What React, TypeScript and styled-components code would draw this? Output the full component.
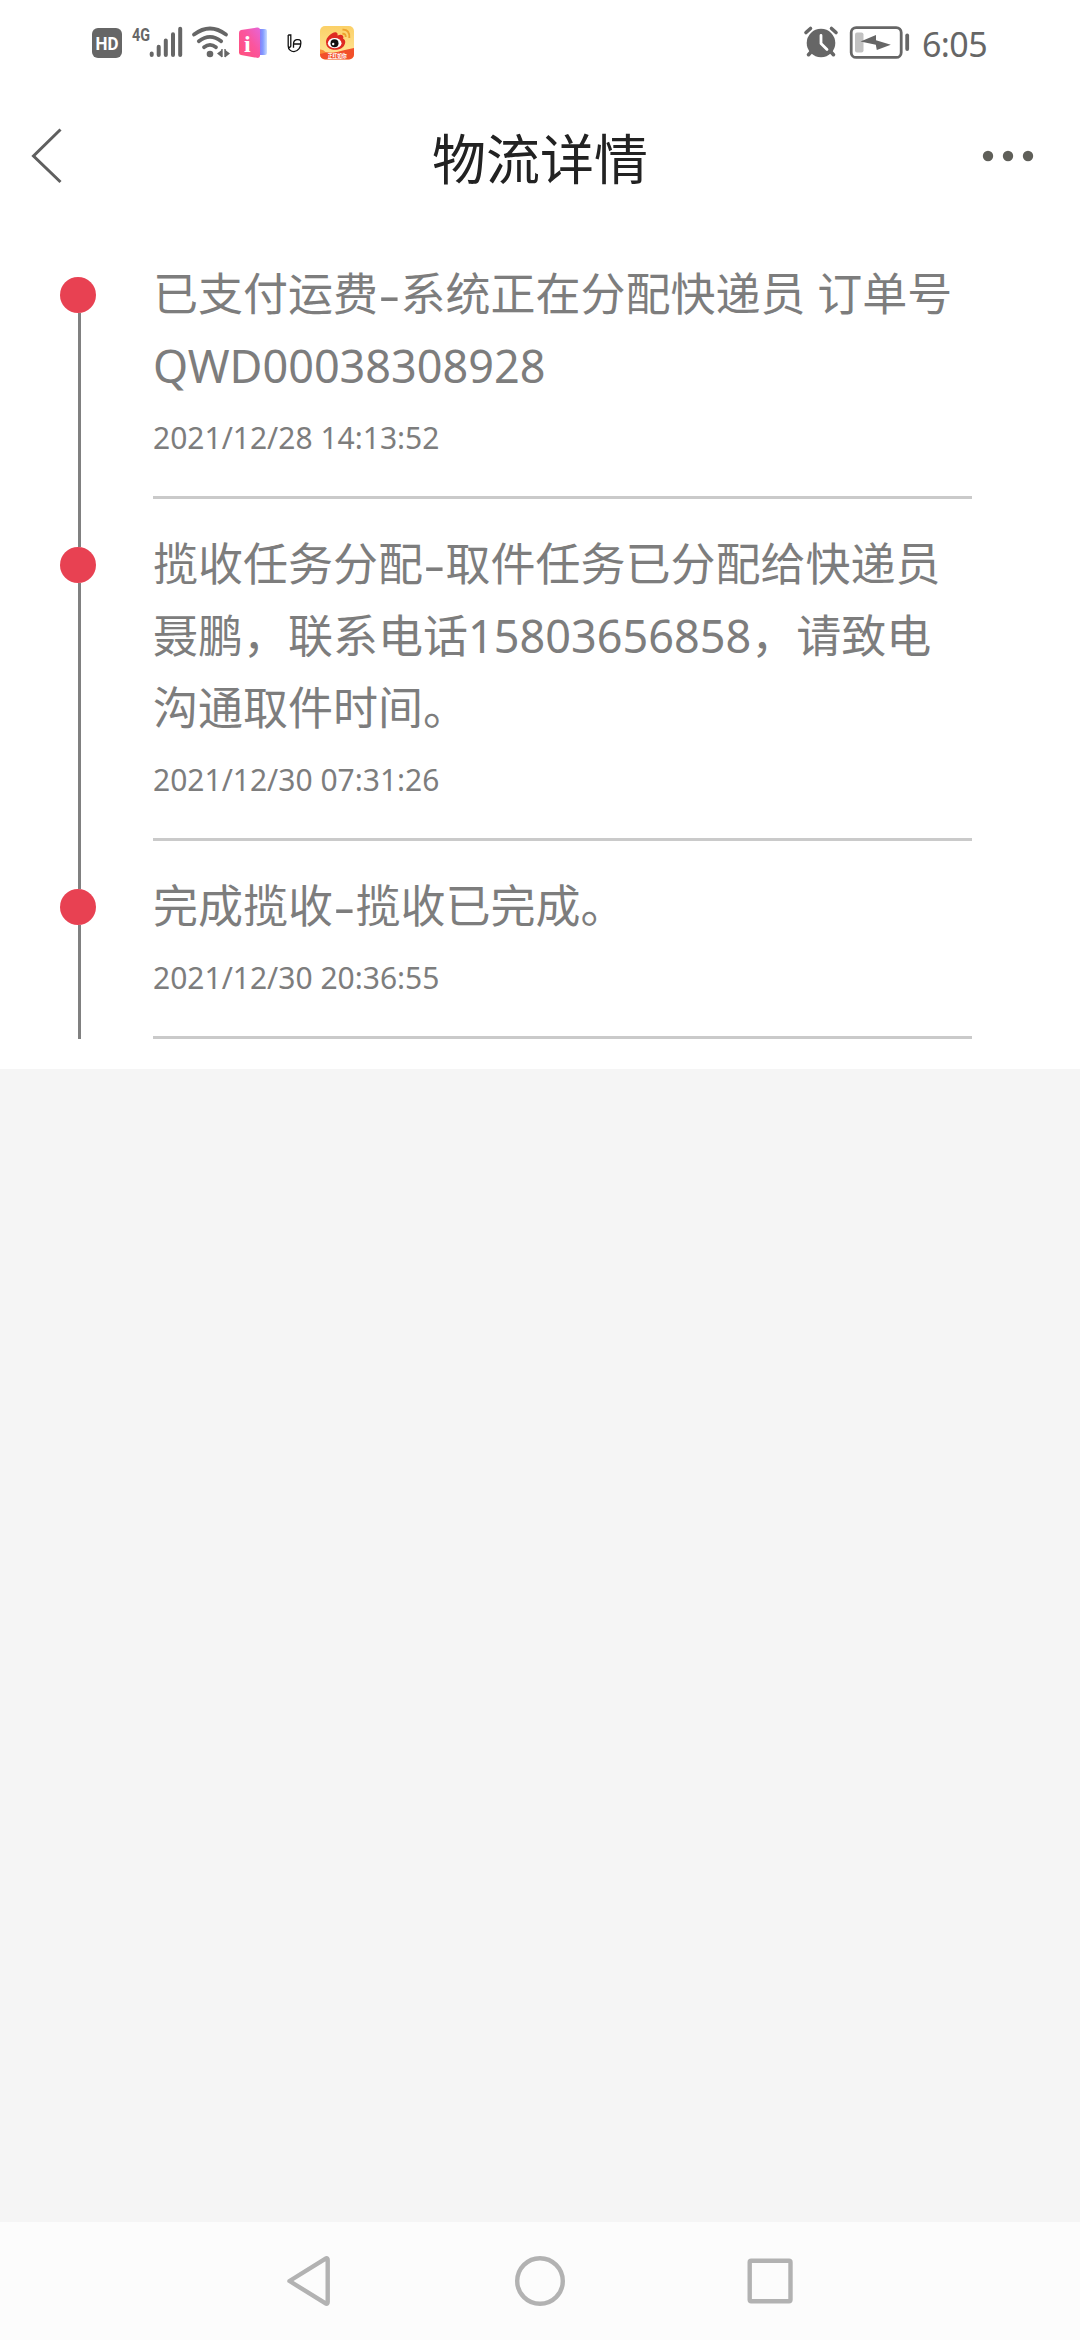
import React from "react";
import styled, { createGlobalStyle } from "styled-components";

const GlobalStyle = createGlobalStyle`
  html, body { margin: 0; padding: 0; background: #f5f5f5; }
  * { box-sizing: border-box; }
`;

const Screen = styled.div`
  width: 1080px;
  height: 2340px;
  display: flex;
  flex-direction: column;
  overflow: hidden;
  background: #f5f5f5;
  color: #7d7d7d;
  font-family: "Noto Sans", "Noto Sans CJK SC", sans-serif;
`;

const StatusBar = styled.header`
  height: 86px;
  padding: 26px 92px 0;
  display: flex;
  align-items: flex-start;
  justify-content: space-between;
  background: #fff;
`;

const StatusGroup = styled.div`
  display: flex;
  align-items: flex-start;
  height: 34px;
`;

const StatusIcon = styled.svg<{ $before?: number }>`
  display: block;
  flex: none;
  height: 34px;
  overflow: visible;
  margin-left: ${(p) => p.$before ?? 0}px;
`;

const Clock = styled.time`
  margin-left: 12px;
  width: 66px;
  font-size: 34px;
  line-height: 36px;
  letter-spacing: -0.6px;
  color: #666;
`;

const TitleBar = styled.nav`
  height: 143px;
  padding: 0 44px 3px 30px;
  display: grid;
  grid-template-columns: 200px 1fr 186px;
  align-items: center;
  background: #fff;
`;

const Title = styled.h1`
  margin: 0;
  padding-top: 5px;
  font-size: 54px;
  line-height: 72px;
  font-weight: 400;
  color: #222;
  text-align: center;
`;

const BackIcon = styled.svg`
  display: block;
  width: 32px;
  height: 56px;
`;

const MoreIcon = styled.svg`
  display: block;
  justify-self: end;
  width: 54px;
  height: 12px;
`;

const Timeline = styled.ol`
  margin: 0;
  padding: 0 108px 30px 60px;
  list-style: none;
  background: #fff;
`;

const Entry = styled.li`
  display: grid;
  grid-template-columns: 36px 1fr;
  column-gap: 57px;
`;

const Rail = styled.div`
  display: flex;
  flex-direction: column;
`;

const Segment = styled.span<{ $lead?: boolean; $hidden?: boolean }>`
  width: 3px;
  margin-left: 18px;
  flex: ${(p) => (p.$lead ? "0 0 48px" : "1")};
  background: ${(p) => (p.$hidden ? "transparent" : "#808080")};
`;

const Dot = styled.span`
  width: 36px;
  height: 36px;
  flex: none;
  border-radius: 50%;
  background: #e84152;
`;

const Details = styled.div`
  padding: 29px 0 22px;
  border-bottom: 3px solid #cacaca;
`;

const Message = styled.p`
  margin: 0;
  font-size: 45px;
  line-height: 72px;
  white-space: pre;
`;

const Dash = styled.span`
  display: inline-block;
  width: 14.5px;
  margin: 0 4px;
  transform: scaleX(1.5);
`;

const Stamp = styled.time`
  display: block;
  font-size: 30px;
  line-height: 72px;
`;

const SystemNav = styled.footer`
  margin-top: auto;
  height: 118px;
  padding: 0 286px;
  display: flex;
  align-items: center;
  justify-content: space-between;
  background: #fcfcfc;
`;

const NavIcon = styled.svg`
  display: block;
  height: 52px;
  fill: none;
  stroke: #b2b2b2;
  stroke-width: 4.4;
  stroke-linejoin: round;
`;

const entries = [
  {
    stage: "已支付运费",
    message: "系统正在分配快递员 订单号\nQWD00038308928",
    time: "2021/12/28 14:13:52",
  },
  {
    stage: "揽收任务分配",
    message: "取件任务已分配给快递员\n聂鹏，联系电话15803656858，请致电\n沟通取件时间。",
    time: "2021/12/30 07:31:26",
  },
  { stage: "完成揽收", message: "揽收已完成。", time: "2021/12/30 20:36:55" },
];

function HdIcon() {
  return (
    <StatusIcon width="30" viewBox="92 26 30 34">
      <rect x="92" y="28" width="30" height="30" rx="6" fill="#666" />
      <text x="107" y="49.8" textAnchor="middle" fontSize="18" fontWeight="700" fill="#fff" fontFamily="Roboto, sans-serif" textLength="23" lengthAdjust="spacingAndGlyphs">HD</text>
    </StatusIcon>
  );
}

function SignalIcon() {
  return (
    <StatusIcon width="51" viewBox="132 26 51 34" $before={10}>
      <text x="132" y="40.5" fontSize="18.5" fontWeight="700" fill="#666" fontFamily="Roboto, sans-serif" textLength="18" lengthAdjust="spacingAndGlyphs">4G</text>
      <g stroke="#666" strokeWidth="4" strokeLinecap="round">
        <path d="M151.7 53.5V55M158.7 46.8V55M165.8 40.5V55M173 34.3V55M180.2 28.7V55" />
      </g>
    </StatusIcon>
  );
}

function WifiIcon() {
  return (
    <StatusIcon width="38" viewBox="192 26 38 34" $before={9}>
      <g fill="none" stroke="#666" strokeWidth="3.8" strokeLinecap="round">
        <path d="M194 34.5Q210 22.5 226 34.5" />
        <path d="M198.8 41.2Q210 32.6 221.2 41.2" />
        <path d="M204 47.2Q210 42.6 216 47.2" />
      </g>
      <circle cx="210" cy="54" r="3.3" fill="#666" />
      <path d="M217 53.6L222 49.8V57.5ZM230 53.6L225 49.8V57.5Z" fill="#666" />
      <path d="M222 49V57M225 49V57" stroke="#666" strokeWidth="1.4" />
    </StatusIcon>
  );
}

function BookIcon() {
  return (
    <StatusIcon width="29" viewBox="239 26 29 34" $before={9}>
      <defs>
        <linearGradient id="cover" x1="0" y1="1" x2="1" y2="0">
          <stop offset="0" stopColor="#ff4f79" />
          <stop offset="0.55" stopColor="#fb559d" />
          <stop offset="1" stopColor="#e665d8" />
        </linearGradient>
        <linearGradient id="pages" x1="0" y1="0" x2="1" y2="0">
          <stop offset="0" stopColor="#8a69f5" />
          <stop offset="0.55" stopColor="#839cff" />
          <stop offset="1" stopColor="#c9dcff" />
        </linearGradient>
      </defs>
      <path d="M258 29H265Q267 29 267 31V53Q267 55 265 55H258Z" fill="url(#pages)" />
      <path d="M239 32.5Q239 30.5 241 30L257 27.6Q260 27.3 260 30V55.5Q260 58.3 257 57.8L241 55Q239 54.6 239 52.5Z" fill="url(#cover)" />
      <text x="247.4" y="51.5" textAnchor="middle" fontSize="24" fontWeight="700" fill="#fff" fontFamily="Liberation Serif, serif">i</text>
    </StatusIcon>
  );
}

function MonogramIcon() {
  return (
    <StatusIcon width="15" viewBox="287 26 15 34" $before={19}>
      <g fill="none" stroke="#111" strokeWidth="1.3">
        <path d="M288.2 35H290.8V45.8Q290.8 47.5 288.4 47.5" />
        <path d="M288.2 35V46C288.2 49.5 291 51.6 294 51.6C298 51.2 300.8 47.5 300.8 43.5V42C300.8 39.8 298.8 39.4 296.8 39.7C294 40.2 293.5 42 293.5 44V47.8M293.5 44H300.5" />
      </g>
    </StatusIcon>
  );
}

function WeiboIcon() {
  return (
    <StatusIcon width="34" viewBox="320 26 34 34" $before={18}>
      <defs>
        <linearGradient id="weibo" x1="0" y1="0" x2="0" y2="1">
          <stop offset="0" stopColor="#fbd067" />
          <stop offset="1" stopColor="#ffe79c" />
        </linearGradient>
        <clipPath id="tile"><rect x="320" y="26" width="34" height="33.5" rx="5" /></clipPath>
      </defs>
      <g clipPath="url(#tile)">
        <rect x="320" y="26" width="34" height="34" fill="url(#weibo)" />
        <path d="M320 51Q330 54 337 52T354 48V60H320Z" fill="#f2502a" />
        <path d="M320 49.5Q323 49 326 52.5L320 54Z" fill="#fa8b35" />
        <path d="M326 42C326 37 333 31 336.5 32.5Q338.3 33.3 337.5 35.5Q342.5 33.5 343.5 37L343 38.5Q346 40 345 43.5C343.5 49.5 336 50.5 332 49.5Q326 48 326 42Z" fill="#df2a22" />
        <ellipse cx="334.7" cy="43.2" rx="6.8" ry="5.1" fill="#fff" />
        <circle cx="334.5" cy="43.2" r="4" fill="#111" />
        <circle cx="333.2" cy="44" r="1.2" fill="#fff" />
        <path d="M342.5 29.7Q350 29.2 349.3 38M342.4 33.8Q346 33.4 345.7 37" fill="none" stroke="#eda22e" strokeWidth="1.9" />
        <text x="337.3" y="58" textAnchor="middle" fontSize="6.2" fontWeight="700" fill="#fff" fontFamily="Noto Sans CJK SC, sans-serif" textLength="19" lengthAdjust="spacingAndGlyphs">正红如你</text>
      </g>
    </StatusIcon>
  );
}

function AlarmIcon() {
  return (
    <StatusIcon width="34" viewBox="805 26 34 34">
      <circle cx="822" cy="43" r="14.3" fill="#666" />
      <g fill="none" stroke="#666" strokeWidth="3.6" strokeLinecap="round">
        <path d="M807 32.5L811.5 28.5M837 32.5L832.5 28.5M812 52L809.5 54.7M832 52L834.5 54.7" />
      </g>
      <path d="M822 35.5V43.5L828 49.5" fill="none" stroke="#fff" strokeWidth="2.8" strokeLinecap="round" strokeLinejoin="round" />
    </StatusIcon>
  );
}

function BatteryIcon() {
  return (
    <StatusIcon width="60" viewBox="851 26 60 34" $before={12}>
      <rect x="852.2" y="27.6" width="50" height="29.8" rx="5" fill="none" stroke="#666" strokeWidth="2.8" />
      <rect x="856" y="32.5" width="8.5" height="20" rx="2" fill="#c2c2c2" />
      <path d="M861.5 41.5L877 35V40.3L891.8 44.8L877.8 50L876.8 44.8Z" fill="#666" />
      <path d="M908.2 35.5V49" stroke="#666" strokeWidth="3.8" strokeLinecap="round" />
    </StatusIcon>
  );
}

export default function App() {
  return (
    <Screen>
      <GlobalStyle />
      <StatusBar>
        <StatusGroup>
          <HdIcon />
          <SignalIcon />
          <WifiIcon />
          <BookIcon />
          <MonogramIcon />
          <WeiboIcon />
        </StatusGroup>
        <StatusGroup>
          <AlarmIcon />
          <BatteryIcon />
          <Clock>6:05</Clock>
        </StatusGroup>
      </StatusBar>

      <TitleBar>
        <BackIcon viewBox="30 128 32 56">
          <path d="M60.5 129.5L33.5 156L60.5 182" fill="none" stroke="#5f5f5f" strokeWidth="3" />
        </BackIcon>
        <Title>物流详情</Title>
        <MoreIcon viewBox="982 151 54 12">
          <g fill="#5f5f59">
            <circle cx="988" cy="157" r="5.2" />
            <circle cx="1008" cy="157" r="5.2" />
            <circle cx="1028" cy="157" r="5.2" />
          </g>
        </MoreIcon>
      </TitleBar>

      <Timeline>
        {entries.map((entry, i) => (
          <Entry key={entry.time}>
            <Rail>
              <Segment $lead $hidden={i === 0} />
              <Dot />
              <Segment />
            </Rail>
            <Details>
              <Message>
                {entry.stage}
                <Dash>-</Dash>
                {entry.message}
              </Message>
              <Stamp>{entry.time}</Stamp>
            </Details>
          </Entry>
        ))}
      </Timeline>

      <SystemNav>
        <NavIcon width="46" viewBox="286 2255 46 52">
          <path d="M289.5 2281L326 2258.3Q327.7 2258 327.7 2260V2302Q327.7 2304 326 2303.7Z" />
        </NavIcon>
        <NavIcon width="52" viewBox="514 2255 52 52">
          <circle cx="540" cy="2281" r="22.8" />
        </NavIcon>
        <NavIcon width="47" viewBox="746 2255 47 52">
          <rect x="748.7" y="2260.8" width="40.8" height="40.4" rx="1.5" />
        </NavIcon>
      </SystemNav>
    </Screen>
  );
}
